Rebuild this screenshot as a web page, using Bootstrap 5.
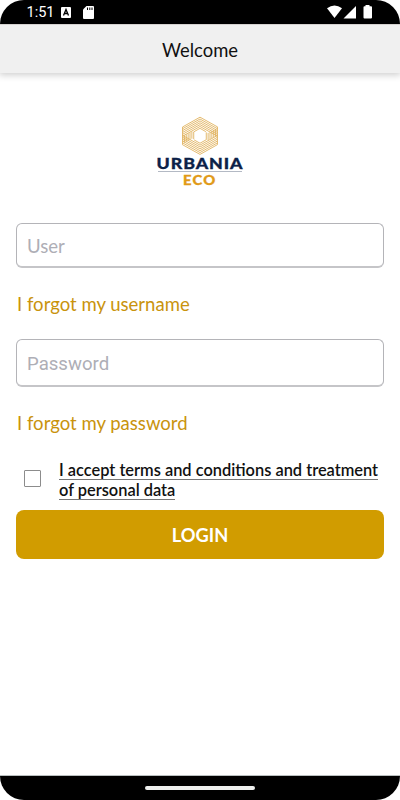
<!DOCTYPE html>
<html lang="en">
<head>
<meta charset="utf-8">
<meta name="viewport" content="width=device-width, initial-scale=1">
<title>Welcome</title>
<link href="https://cdn.jsdelivr.net/npm/bootstrap@5.3.0/dist/css/bootstrap.min.css" rel="stylesheet">
<style>
body{font-family:Lato,sans-serif;color:#111;background:#fff}
.screen{height:800px;overflow:hidden;background:#fff}
.status{height:24px;background:#000;border-radius:24px 24px 0 0;color:#fff;font:14.5px/24px Roboto,sans-serif;padding-left:26.5px;padding-right:27px}
.status-time{width:33px;padding-top:1px}
.topbar{height:49px;background:#f0f0f0;border-top:1px solid #d5d2d0;box-shadow:0 1px 7px 1px rgba(0,0,0,.2);font-size:18.4px;line-height:27px;padding-top:12px}
.brand{height:150px;padding-top:43px}
.login-form{padding:0 16px}
.login-form .form-control{border:1px solid #b4b4b8;border-bottom:2px solid #c5c5c8;border-radius:6px;padding:1px 10px 0;font-size:18.6px;color:#222;box-shadow:none}
.login-form .form-control::placeholder{color:#aeaeb6;opacity:1}
.login-form .field-user{height:45px}
.login-form .field-pass{height:48px;padding-top:2px;font-family:Roboto,sans-serif;font-size:18.6px}
.gold-link{color:#c9930d;font-size:18.55px;line-height:24px;padding-left:1px}
.user-link{margin:24px 0 23px}
.pass-link{margin:24px 0}
.login-form .form-check-input{width:17px;height:17px;border:1px solid #8c8c8c;border-radius:1px;margin:11px 18px 0 8px}
.terms{font-size:16.4px;line-height:20px;font-weight:600;color:#111;padding-top:1px}
.terms span{border-bottom:1px solid #777}
.btn-login{height:49px;margin-top:10px;padding-top:8px;background:#d19c00;color:#fff;border:0;border-radius:8px;font-size:18.3px;font-weight:700}
.gesture{height:25px;background:#000;border-radius:0 0 24px 24px;border-top:1px solid #b9bfbf}
.gesture-pill{width:110px;height:4px;border-radius:2px;background:#eef0ee}
</style>
<script src="https://cdn.jsdelivr.net/npm/bootstrap@5.3.0/dist/js/bootstrap.bundle.min.js"></script>
</head>
<body>
<div class="screen d-flex flex-column">
  <div class="status d-flex align-items-center flex-shrink-0">
    <span class="status-time">1:51</span>
    <svg width="40" height="24" viewBox="60 0 40 24"><rect x="61" y="7" width="10" height="11" rx="1" fill="#fff"/><path d="M63.5 15.5 66 9.500 68.500 15.500M64.500 13.500H67.500" fill="none" stroke="#000" stroke-width="1.300"/><path d="M86.500 6H93Q94 6 94 7V18Q94 19 93 19H84Q83 19 83 18V9.500Z" fill="#fff"/><path d="M87.500 7.500V10M89.800 7.500V10M92 7.500V10" stroke="#000" stroke-width="1"/></svg>
    <svg class="ms-auto" width="46" height="24" viewBox="327 0 46 24" fill="#fff"><path d="M327 8.300Q334.500 2.500 342 8.300L334.500 18Z"/><path d="M356 6V18.500H343.500Z"/><path d="M365.500 5H369.500V6.300H371Q372 6.300 372 7.300V17.500Q372 18.500 371 18.500H364.500Q363.500 18.500 363.500 17.500V7.300Q363.500 6.300 364.500 6.300H365.500Z"/></svg>
  </div>
  <header class="topbar text-center flex-shrink-0">Welcome</header>
  <div class="brand text-center">
    <svg width="90" height="72" viewBox="155 116 90 72" class="d-block mx-auto">
      <g transform="translate(200 135.800) scale(.98)" fill="none" stroke="#e0b25c" stroke-width=".9">
        <g id="swirl"><path d="M0-19 18-9M0-17.100 18-7.100M0-15.200 18-5.200M0-13.300 18-3.300M0-11.400 18-1.400M0-9.500 18 .500M0-7.600 6 -4.200M-17.800 9V-9L0-19M-15.900 7V-.500M-14 6V-1.500M-12.100 5V-2.500M-10.200 4V-3.500M-8.300 3V-4.500M-6.400 3.500V-4L0-7.600M-17.800-7.200 0-17.100M-17.800-5.300 0-15.200M-17.800-3.400 0-13.300M-17.800-1.500 0-11.400M-17.800 .400 0-9.500"/></g>
        <use href="#swirl" transform="rotate(180)"/>
      </g>
      <g font-family="Lato,sans-serif" font-weight="900">
        <text x="156.500" y="169.300" font-size="15.200" letter-spacing=".8" fill="#0c2148" stroke="#0c2148" stroke-width=".3" textLength="87" lengthAdjust="spacingAndGlyphs">URBANIA</text>
        <path d="M158 171.500H242" stroke="#b3b9c4" stroke-width="1"/>
        <text x="183" y="184.500" font-size="12.300" letter-spacing="1" fill="#e19a17" stroke="#e19a17" stroke-width=".3" textLength="33.500" lengthAdjust="spacingAndGlyphs">ECO</text>
      </g>
    </svg>
  </div>
  <form class="login-form flex-grow-1" onsubmit="return false">
    <input class="form-control field-user" type="text" placeholder="User" aria-label="User">
    <div class="gold-link user-link">I forgot my username</div>
    <input class="form-control field-pass" type="password" placeholder="Password" aria-label="Password">
    <div class="gold-link pass-link">I forgot my password</div>
    <div class="d-flex align-items-start">
      <input class="form-check-input flex-shrink-0" type="checkbox" id="terms">
      <label class="terms text-nowrap" for="terms"><span>I accept terms and conditions and treatment</span><br><span>of personal data</span></label>
    </div>
    <button class="btn btn-login w-100" type="submit">LOGIN</button>
  </form>
  <div class="gesture d-flex justify-content-center align-items-center flex-shrink-0"><div class="gesture-pill"></div></div>
</div>
</body>
</html>
